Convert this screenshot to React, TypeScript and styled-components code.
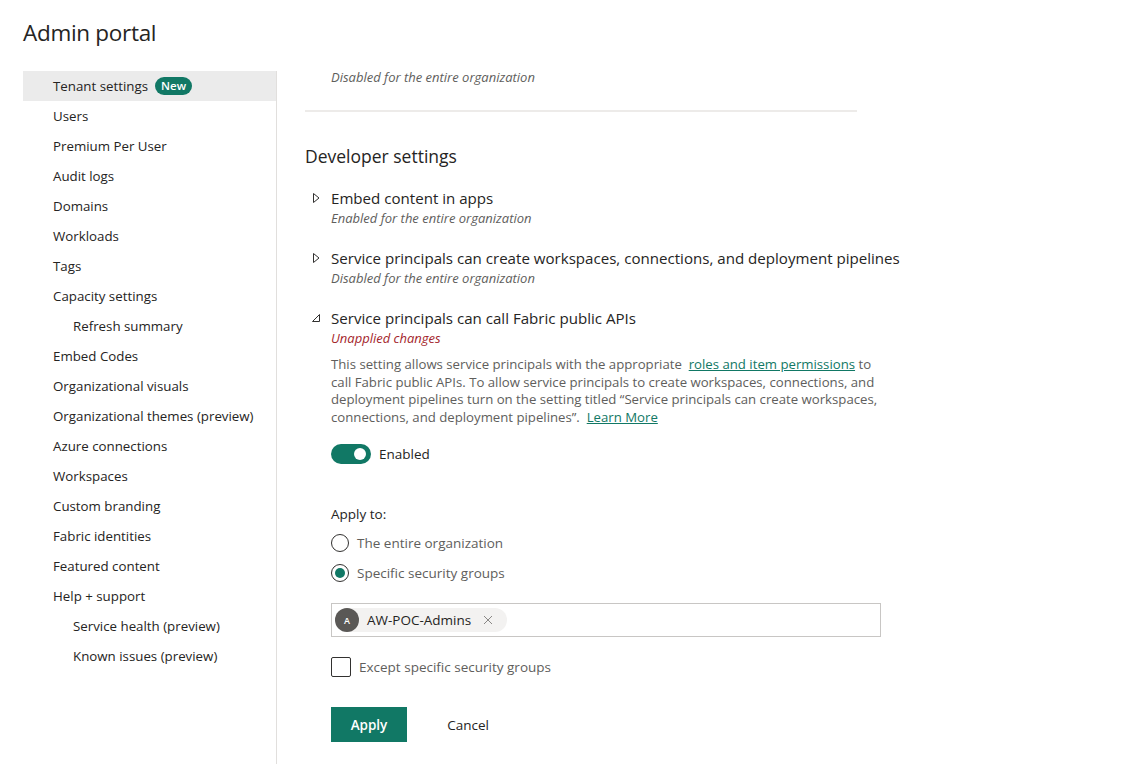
import styled, { createGlobalStyle } from 'styled-components';

const GREEN = '#117865';

const GlobalStyle = createGlobalStyle`
  body {
    margin: 0;
    background: #fff;
    font-family: 'Open Sans', 'Noto Sans', sans-serif;
    color: #252423;
  }
`;

const navItems: { label: string; sub?: boolean; active?: boolean; badge?: string }[] = [
  { label: 'Tenant settings', active: true, badge: 'New' },
  { label: 'Users' },
  { label: 'Premium Per User' },
  { label: 'Audit logs' },
  { label: 'Domains' },
  { label: 'Workloads' },
  { label: 'Tags' },
  { label: 'Capacity settings' },
  { label: 'Refresh summary', sub: true },
  { label: 'Embed Codes' },
  { label: 'Organizational visuals' },
  { label: 'Organizational themes (preview)' },
  { label: 'Azure connections' },
  { label: 'Workspaces' },
  { label: 'Custom branding' },
  { label: 'Fabric identities' },
  { label: 'Featured content' },
  { label: 'Help + support' },
  { label: 'Service health (preview)', sub: true },
  { label: 'Known issues (preview)', sub: true },
];

const Caret = ({ open }: { open?: boolean }) =>
  open ? (
    <svg width="10" height="10" viewBox="0 0 10 10">
      <path d="M8.5 1.5 L8.5 8.5 L1.5 8.5 Z" fill="none" stroke="#323130" strokeWidth="1" strokeLinejoin="round" />
    </svg>
  ) : (
    <svg width="10" height="12" viewBox="0 0 10 12">
      <path d="M2.5 1.5 L8 6 L2.5 10.5 Z" fill="none" stroke="#323130" strokeWidth="1" strokeLinejoin="round" />
    </svg>
  );

const App = () => {
  return (
    <Page>
      <GlobalStyle />
      <Title>Admin portal</Title>
      <Layout>
        <Nav>
          {navItems.map((item) => (
            <NavItem key={item.label} active={item.active} sub={item.sub}>
              {item.label}
              {item.badge && <Badge>{item.badge}</Badge>}
            </NavItem>
          ))}
        </Nav>
        <Content>
          <Status>Disabled for the entire organization</Status>
          <Divider />
          <SectionTitle>Developer settings</SectionTitle>

          <Setting>
            <SettingHead>
              <CaretBox>
                <Caret />
              </CaretBox>
              <SettingTitle>Embed content in apps</SettingTitle>
            </SettingHead>
            <Status>Enabled for the entire organization</Status>
          </Setting>

          <Setting>
            <SettingHead>
              <CaretBox>
                <Caret />
              </CaretBox>
              <SettingTitle>
                Service principals can create workspaces, connections, and deployment pipelines
              </SettingTitle>
            </SettingHead>
            <Status>Disabled for the entire organization</Status>
          </Setting>

          <Setting>
            <SettingHead>
              <CaretBox>
                <Caret open />
              </CaretBox>
              <SettingTitle>Service principals can call Fabric public APIs</SettingTitle>
            </SettingHead>
            <Status warn>Unapplied changes</Status>
            <Body>
              <Description>
                This setting allows service principals with the appropriate&nbsp;{' '}
                <TextLink>roles and item permissions</TextLink> to call Fabric public APIs. To
                allow service principals to create workspaces, connections, and deployment
                pipelines turn on the setting titled “Service principals can create workspaces,
                connections, and deployment pipelines”.&nbsp; <TextLink>Learn More</TextLink>
              </Description>

              <ToggleRow>
                <Toggle on>
                  <Knob />
                </Toggle>
                <span>Enabled</span>
              </ToggleRow>

              <ApplyLabel>Apply to:</ApplyLabel>
              <RadioRow>
                <Radio />
                <ChoiceLabel>The entire organization</ChoiceLabel>
              </RadioRow>
              <RadioRow>
                <Radio checked />
                <ChoiceLabel>Specific security groups</ChoiceLabel>
              </RadioRow>

              <PickerBox>
                <Chip>
                  <Avatar>A</Avatar>
                  <ChipText>AW-POC-Admins</ChipText>
                  <svg width="10" height="10" viewBox="0 0 10 10">
                    <path d="M1 1 L9 9 M9 1 L1 9" stroke="#8a8886" strokeWidth="1" />
                  </svg>
                </Chip>
              </PickerBox>

              <CheckRow>
                <CheckBox />
                <ChoiceLabel>Except specific security groups</ChoiceLabel>
              </CheckRow>

              <Actions>
                <PrimaryButton>Apply</PrimaryButton>
                <GhostButton>Cancel</GhostButton>
              </Actions>
            </Body>
          </Setting>
        </Content>
      </Layout>
    </Page>
  );
};

const Page = styled.div`
  width: 1142px;
  height: 764px;
  overflow: hidden;
  padding-left: 23px;
  box-sizing: border-box;
`;

const Title = styled.h1`
  margin: 0;
  padding-top: 17px;
  height: 71px;
  box-sizing: border-box;
  font-size: 22.5px;
  line-height: 32px;
  font-weight: 400;
  color: #252423;
  letter-spacing: -0.3px;
`;

const Layout = styled.div`
  display: flex;
  height: 693px;
`;

const Nav = styled.nav`
  width: 253px;
  flex-shrink: 0;
  border-right: 1px solid #e1dfdd;
`;

const NavItem = styled.div<{ active?: boolean; sub?: boolean }>`
  height: 30px;
  display: flex;
  align-items: center;
  padding-left: ${(p) => (p.sub ? 50 : 30)}px;
  font-size: 13.3px;
  color: #252423;
  background: ${(p) => (p.active ? '#ebebeb' : 'transparent')};
  white-space: nowrap;
`;

const Badge = styled.span`
  margin-left: 7px;
  height: 18px;
  padding: 0 6px;
  border-radius: 9px;
  background: ${GREEN};
  color: #fff;
  font-size: 11.5px;
  font-weight: 600;
  line-height: 18px;
`;

const Content = styled.main`
  padding-left: 28px;
  margin-top: -3px;
  width: 580px;
`;

const Status = styled.div<{ warn?: boolean }>`
  padding-left: 26px;
  font-size: 13px;
  line-height: 18px;
  font-style: italic;
  color: ${(p) => (p.warn ? '#a4262c' : '#605e5c')};
`;

const Divider = styled.hr`
  margin: 24px 0 0;
  width: 552px;
  border: none;
  height: 2px;
  background: #edebe9;
`;

const SectionTitle = styled.h2`
  margin: 32px 0 0;
  font-size: 17.5px;
  line-height: 24px;
  font-weight: 400;
  color: #252423;
`;

const Setting = styled.section`
  margin-top: 19px;
  & + & {
    margin-top: 20px;
  }
`;

const SettingHead = styled.div`
  display: flex;
  align-items: center;
  height: 22px;
`;

const CaretBox = styled.span`
  width: 26px;
  flex-shrink: 0;
  display: flex;
  align-items: center;
  padding-left: 6px;
  box-sizing: border-box;
`;

const SettingTitle = styled.div`
  font-size: 15.1px;
  line-height: 22px;
  color: #252423;
  white-space: nowrap;
`;

const Body = styled.div`
  padding-left: 26px;
  width: 550px;
`;

const Description = styled.p`
  margin: 9px 0 0;
  font-size: 13.2px;
  line-height: 17.5px;
  color: #605e5c;
`;

const TextLink = styled.a`
  color: ${GREEN};
  text-decoration: underline;
`;

const ToggleRow = styled.div`
  margin-top: 18px;
  display: flex;
  align-items: center;
  gap: 8px;
  font-size: 13.5px;
  color: #252423;
`;

const Toggle = styled.div<{ on?: boolean }>`
  width: 40px;
  height: 20px;
  border-radius: 10px;
  box-sizing: border-box;
  background: ${(p) => (p.on ? GREEN : '#fff')};
  display: flex;
  align-items: center;
  justify-content: ${(p) => (p.on ? 'flex-end' : 'flex-start')};
  padding: 0 5px;
`;

const Knob = styled.span`
  width: 12px;
  height: 12px;
  border-radius: 50%;
  background: #fff;
`;

const ApplyLabel = styled.div`
  margin: 40px 0 4px;
  font-size: 13.5px;
  line-height: 20px;
  color: #252423;
`;

const RadioRow = styled.div`
  height: 30px;
  display: flex;
  align-items: center;
  gap: 8px;
`;

const Radio = styled.span<{ checked?: boolean }>`
  width: 18px;
  height: 18px;
  border-radius: 50%;
  border: 1px solid #323130;
  box-sizing: border-box;
  display: flex;
  align-items: center;
  justify-content: center;
  &::after {
    content: '';
    width: 10px;
    height: 10px;
    border-radius: 50%;
    background: ${(p) => (p.checked ? GREEN : 'transparent')};
  }
`;

const ChoiceLabel = styled.span`
  font-size: 13.5px;
  color: #605e5c;
`;

const PickerBox = styled.div`
  margin-top: 15px;
  height: 34px;
  border: 1px solid #c8c6c4;
  box-sizing: border-box;
  display: flex;
  align-items: center;
  padding-left: 3px;
`;

const Chip = styled.div`
  height: 24px;
  display: flex;
  align-items: center;
  gap: 8px;
  padding-right: 14px;
  background: #f3f2f1;
  border-radius: 12px;
`;

const Avatar = styled.span`
  width: 24px;
  height: 24px;
  border-radius: 50%;
  background: #5a5856;
  color: #fff;
  font-size: 9px;
  font-weight: 600;
  display: flex;
  align-items: center;
  justify-content: center;
`;

const ChipText = styled.span`
  font-size: 13.5px;
  color: #252423;
  margin-right: 4px;
`;

const CheckRow = styled.div`
  margin-top: 20px;
  display: flex;
  align-items: center;
  gap: 8px;
`;

const CheckBox = styled.span`
  width: 20px;
  height: 20px;
  border: 1px solid #323130;
  border-radius: 2px;
  box-sizing: border-box;
`;

const Actions = styled.div`
  margin-top: 30px;
  display: flex;
  align-items: center;
  gap: 23px;
`;

const PrimaryButton = styled.button`
  width: 76px;
  height: 35px;
  border: none;
  background: ${GREEN};
  color: #fff;
  font-family: inherit;
  font-size: 13.5px;
  font-weight: 600;
`;

const GhostButton = styled.button`
  width: 76px;
  height: 35px;
  border: none;
  background: transparent;
  color: #252423;
  font-family: inherit;
  font-size: 13.5px;
`;

export default App;
